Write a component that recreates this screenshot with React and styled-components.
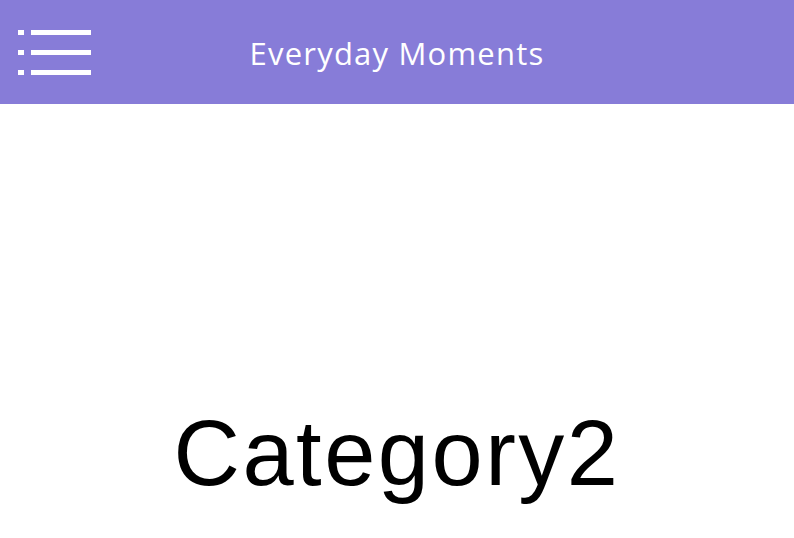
import React from 'react';
import styled, { createGlobalStyle } from 'styled-components';

const GlobalStyle = createGlobalStyle`
  html, body {
    margin: 0;
    padding: 0;
    background: #ffffff;
  }
  body {
    font-family: 'Liberation Sans', Arial, sans-serif;
  }
`;

const Page = styled.div`
  width: 794px;
  height: 538px;
  display: flex;
  flex-direction: column;
  overflow: hidden;
`;

const TopBar = styled.header`
  height: 104px;
  flex-shrink: 0;
  background-color: #877cd8;
  display: grid;
  grid-template-columns: 1fr auto 1fr;
  align-items: center;
`;

const MenuButton = styled.button`
  justify-self: start;
  width: 76px;
  height: 45px;
  margin-left: 18px;
  padding: 0;
  border: none;
  background: transparent;
  display: flex;
  flex-direction: column;
  justify-content: space-between;
  cursor: pointer;
`;

const MenuRow = styled.span`
  display: flex;
  align-items: center;
  gap: 7px;
  height: 5px;
`;

const Dot = styled.span`
  width: 6px;
  height: 5px;
  background: #ffffff;
`;

const Line = styled.span`
  width: 60px;
  height: 5px;
  background: #ffffff;
`;

const Title = styled.h1`
  margin: 0;
  color: #ffffff;
  font-family: 'Open Sans', 'Liberation Sans', sans-serif;
  font-weight: 400;
  font-size: 31px;
  letter-spacing: 1.2px;
  padding-top: 2px;
`;

const Content = styled.main`
  flex: 1;
  display: flex;
  justify-content: center;
  align-items: flex-start;
  padding-top: 303px;
`;

const Heading = styled.div`
  font-family: 'Liberation Sans', Arial, sans-serif;
  font-size: 92px;
  line-height: 92px;
  letter-spacing: 2.5px;
  color: #000000;
`;

const rows = [0, 1, 2];

const App = () => (
  <>
    <GlobalStyle />
    <Page>
      <TopBar>
        <MenuButton aria-label="menu">
          {rows.map((r) => (
            <MenuRow key={r}>
              <Dot />
              <Line />
            </MenuRow>
          ))}
        </MenuButton>
        <Title>Everyday Moments</Title>
        <span />
      </TopBar>
      <Content>
        <Heading>Category2</Heading>
      </Content>
    </Page>
  </>
);

export default App;
